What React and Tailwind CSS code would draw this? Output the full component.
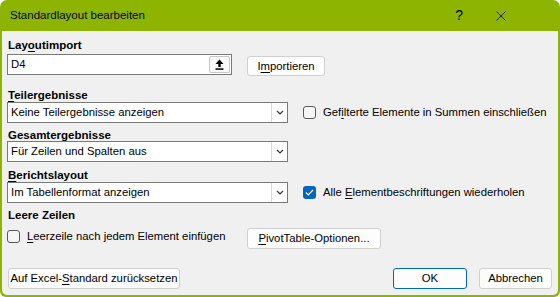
import React from 'react'

const font = { fontFamily: '"Segoe UI", "Liberation Sans", Arial, sans-serif' }

function U({ children }) {
  return <span className="underline underline-offset-2">{children}</span>
}

function Label({ children, className = '' }) {
  return (
    <div className={`whitespace-nowrap pl-[1px] text-[11.5px] font-bold leading-[14px] text-black ${className}`}>
      {children}
    </div>
  )
}

function Select({ value }) {
  return (
    <div className="flex h-[21px] w-[281px] shrink-0 items-center border border-[#7a7a7a] bg-white">
      <span className="flex-1 whitespace-nowrap pl-[3px] text-[11.3px] leading-[15px] text-black">{value}</span>
      <div className="flex h-full w-[16px] items-center justify-center border-l border-[#d8d8d8]">
        <svg width="8" height="5" viewBox="0 0 8 5">
          <path d="M1 1 L4 4 L7 1" fill="none" stroke="#333" strokeWidth="1.2" />
        </svg>
      </div>
    </div>
  )
}

function Check({ checked, children }) {
  return (
    <div className="flex items-center gap-[7px] whitespace-nowrap">
      {checked ? (
        <div className="flex h-[13px] w-[13px] shrink-0 items-center justify-center rounded-[3px] bg-[#0067c0]">
          <svg width="9" height="7" viewBox="0 0 9 7">
            <path d="M1 3.5 L3.3 5.8 L8 1" fill="none" stroke="white" strokeWidth="1.2" />
          </svg>
        </div>
      ) : (
        <div className="h-[13px] w-[13px] shrink-0 rounded-[3px] border border-[#5a5a5a] bg-[#f6f6f6]" />
      )}
      <span className="text-[11.3px] leading-[15px] text-black">{children}</span>
    </div>
  )
}

function Button({ children, className = '', primary }) {
  return (
    <div
      className={`flex shrink-0 items-center justify-center whitespace-nowrap rounded-[3px] bg-[#fdfdfd] text-[11.3px] leading-[15px] text-black ${
        primary ? 'border border-[#0067c0]' : 'border border-[#d0d0d0]'
      } ${className}`}
    >
      {children}
    </div>
  )
}

export default function App() {
  return (
    <div style={font} className="h-[297px] w-[560px] overflow-hidden bg-white">
      <div className="flex h-full flex-col rounded-t-[7px] rounded-b-[6px] bg-[#8cb400] px-[2px] pb-[2px]">
        <div className="flex h-[31px] shrink-0 items-center pl-[8px] text-[11.5px] leading-[15px] text-black">
          <span className="flex-1">Standardlayout bearbeiten</span>
          <span className="mr-[33px] text-[14px]">?</span>
          <svg width="10" height="10" viewBox="0 0 10 10" className="mr-[52px]">
            <path d="M0.5 0.5 L9.5 9.5 M9.5 0.5 L0.5 9.5" stroke="#222" strokeWidth="1" />
          </svg>
        </div>
        <div className="flex flex-1 flex-col rounded-b-[5px] bg-[#f0f0f0] pl-[5px] pr-[6px]">
          <Label className="mt-[7px] h-[12px]">
            Lay<U>o</U>utimport
          </Label>
          <div className="mt-[4px] flex items-start">
            <div className="flex h-[21px] w-[225px] items-center border border-[#7a7a7a] bg-white">
              <span className="flex-1 pl-[3px] text-[11.3px] leading-[15px]">D4</span>
              <div className="mr-[1px] flex h-[17px] w-[21px] items-center justify-center rounded-[2px] border border-[#c8c8c8] bg-[#fafafa]">
                <svg width="9" height="11" viewBox="0 0 9 11">
                  <path d="M4.5 0.5 L8.5 5 L5.7 5 L5.7 8 L3.3 8 L3.3 5 L0.5 5 Z" fill="#000" />
                  <rect x="0.5" y="9.3" width="8" height="1.5" fill="#000" />
                </svg>
              </div>
            </div>
            <Button className="ml-[15px] mt-[2px] h-[20px] w-[78px]">
              I<U>m</U>portieren
            </Button>
          </div>

          <Label className="mt-[12px] h-[14px]">
            <U>T</U>eilergebnisse
          </Label>
          <div className="flex items-center">
            <Select value="Keine Teilergebnisse anzeigen" />
            <div className="ml-[15px]">
              <Check>
                Gef<U>i</U>lterte Elemente in Summen einschließen
              </Check>
            </div>
          </div>

          <Label className="mt-[5px] h-[13px]">
            <U>G</U>esamtergebnisse
          </Label>
          <div className="flex">
            <Select value="Für Zeilen und Spalten aus" />
          </div>

          <Label className="mt-[6px] h-[14px]">
            <U>B</U>erichtslayout
          </Label>
          <div className="flex items-center">
            <Select value="Im Tabellenformat anzeigen" />
            <div className="ml-[15px]">
              <Check checked>
                Alle <U>E</U>lementbeschriftungen wiederholen
              </Check>
            </div>
          </div>

          <Label className="mt-[5px] h-[12px]">Leere Zeilen</Label>
          <div className="mt-[8px] flex items-start">
            <div className="mt-[1px] w-[240px]">
              <Check>
                <U>L</U>eerzeile nach jedem Element einfügen
              </Check>
            </div>
            <Button className="h-[21px] w-[134px]">
              <U>P</U>ivotTable-Optionen...
            </Button>
          </div>

          <div className="mb-[6px] mt-auto flex items-center">
            <Button className="ml-[1px] h-[21px] w-[172px]">
              Auf Excel-<U>S</U>tandard zurücksetzen
            </Button>
            <div className="flex-1" />
            <Button primary className="h-[21px] w-[74px]">
              OK
            </Button>
            <Button className="ml-[12px] h-[21px] w-[73px]">Abbrechen</Button>
          </div>
        </div>
      </div>
    </div>
  )
}
